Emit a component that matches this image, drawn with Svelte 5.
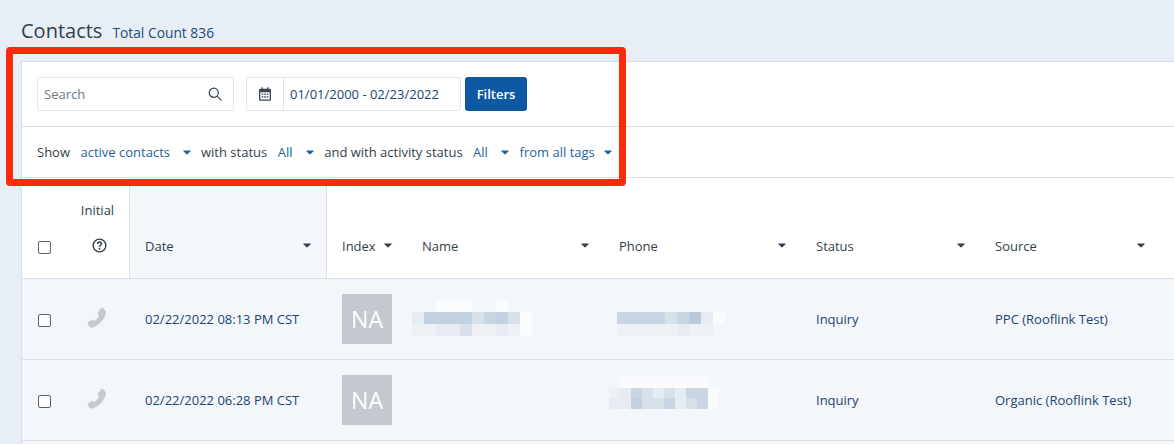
<script>
	const columns = [
		{ label: 'Date', cls: 'date' },
		{ label: 'Index', cls: 'index' },
		{ label: 'Name', cls: 'name' },
		{ label: 'Phone', cls: 'phone' },
		{ label: 'Status', cls: 'status' },
		{ label: 'Source', cls: 'source' }
	];

	// colour cells of the blurred-out name and phone values
	const A = '#c3d0df', B = '#c9d5e2', C = '#d8e1ea', D = '#e6ecf1', E = '#edf1f6', F = '#fafbfd', _ = 'transparent', T = '#b9c9da';
	const rows = [
		{
			date: '02/22/2022 08:13 PM CST',
			source: 'PPC (Rooflink Test)',
			name: { left: 5, w: 12, h: 12, up: 1, cells: [
				[_, _, F, F, F, _, _, F, _, _],
				[D, A, A, A, A, C, B, A, C, F],
				[E, E, D, D, C, E, E, D, E, F]
			] },
			phone: { left: 13, w: 12, h: 12, up: 1, cells: [
				[_, _, _, _, _, _, _, _, _],
				[B, B, B, B, C, B, T, D, F],
				[E, E, E, E, E, D, E, E, _]
			] }
		},
		{
			date: '02/22/2022 06:28 PM CST',
			source: 'Organic (Rooflink Test)',
			name: null,
			phone: { left: 5, w: 11, h: 10.5, up: 7, cells: [
				[_, F, F, F, F, F, F, F, F, _],
				[E, D, B, C, D, C, D, B, B, F],
				[D, D, A, C, C, B, D, C, B, F]
			] }
		},
		{ date: '', source: '', name: null, phone: null }
	];
</script>

{#snippet caret()}
	<svg class="caret" viewBox="0 0 10 6" width="8" height="5"><path d="M1 .4h8c.6 0 .9.7.5 1.100L5.500 5.300c-.3.3-.7.3-1 0L.5 1.500C.1 1.100.4.4 1 .4z"/></svg>
{/snippet}

{#snippet mosaic(m)}
	{#if m}
		<div class="mosaic" style="margin-left: {m.left}px; margin-bottom: {m.up * 2}px">
			{#each m.cells as line}
				<div class="line">
					{#each line as colour}
						<i style="background: {colour}; width: {m.w}px; height: {m.h}px"></i>
					{/each}
				</div>
			{/each}
		</div>
	{/if}
{/snippet}

<div class="page">
	<header class="title">
		<h1>Contacts</h1>
		<span>Total Count 836</span>
	</header>

	<section class="card">
		<div class="toolbar">
			<div class="search">
				<input placeholder="Search" />
				<button aria-label="Search">
					<svg viewBox="0 0 16 16" width="14" height="14" fill="none" stroke="#3a4654" stroke-width="1.4"><circle cx="6.600" cy="6.600" r="5.200"/><path d="M10.400 10.400l4.600 4.600" stroke-linecap="round"/></svg>
				</button>
			</div>
			<div class="range">
				<span class="cal">
					<svg viewBox="0 0 14 16" width="12" height="14"><path fill="#3a4654" d="M3 0h1.500v2h5V0H11v2h1.500c.8 0 1.500.7 1.500 1.500v11c0 .8-.7 1.500-1.500 1.500h-11C.7 16 0 15.300 0 14.500v-11C0 2.700.7 2 1.500 2H3zM1.500 6v8.500h11V6z"/><path fill="#3a4654" d="M3 7.500h2v1.500H3zm3 0h2v1.500H6zm3 0h2v1.500H9zm-6 3h2V12H3zm3 0h2V12H6zm3 0h2V12H9z"/></svg>
				</span>
				<span class="dates">01/01/2000 - 02/23/2022</span>
			</div>
			<button class="filters">Filters</button>
		</div>

		<div class="show">
			<span>Show</span>
			<a class="w1">active contacts {@render caret()}</a>
			<span>with status</span>
			<a class="w2">All {@render caret()}</a>
			<span>and with activity status</span>
			<a class="w2">All {@render caret()}</a>
			<a class="w3">from all tags {@render caret()}</a>
		</div>

		<div class="thead">
			<div class="c-check"><input type="checkbox" /></div>
			<div class="c-initial">
				<span>Initial</span>
				<svg viewBox="0 0 16 16" width="15" height="15" fill="none" stroke="#333f4c" stroke-width="1.500"><circle cx="8" cy="8" r="6.800"/><path d="M5.900 6.300c0-1.200.9-2 2.100-2s2.100.8 2.100 1.900c0 1.600-2.100 1.500-2.100 3.100" stroke-width="1.600"/><circle cx="8" cy="11.500" r="1" fill="#333f4c" stroke="none"/></svg>
			</div>
			{#each columns as col}
				<div class="th {col.cls}">
					<span>{col.label}</span>
					{@render caret()}
				</div>
			{/each}
			<div></div>
		</div>

		{#each rows as row}
			<div class="row">
				<div class="c-check"><input type="checkbox" /></div>
				<div class="c-phone">
					<svg viewBox="-1 -1 22 22" width="22" height="22"><path fill="#c3cad0" stroke="#c3cad0" stroke-width="1.200" stroke-linejoin="round" d="M13.600 .6c.5-.3 1.100-.2 1.400.2l2.100 2.700c.3.300.4.800.3 1.200C16 11.400 11.400 16 5.200 18.600c-.6.300-1.300.5-2 .4-.5-.1-.9-.4-1.200-.8L.5 16.200c-.4-.5-.3-1.100.1-1.500l2.600-2c.5-.4 1.200-.3 1.600.1l1.100 1.100c2.900-1.400 4.900-3.700 6-6.700l-1.200-.9c-.5-.4-.6-1.100-.3-1.600z"/></svg>
				</div>
				<div class="td date-cell">{row.date}</div>
				<div class="td">
					{#if row.date}<span class="avatar">NA</span>{/if}
				</div>
				<div class="td pad0">{@render mosaic(row.name)}</div>
				<div class="td pad0">{@render mosaic(row.phone)}</div>
				<div class="td">{row.date ? 'Inquiry' : ''}</div>
				<div class="td">{row.source}</div>
				<div></div>
			</div>
		{/each}
	</section>

	<div class="highlight"></div>
</div>

<style>
	:global(body) {
		margin: 0;
		background: #e8eef5;
		overflow: hidden;
	}

	.page {
		position: relative;
		height: 444px;
		overflow: hidden;
		padding-left: 21px;
		font-family: "Open Sans", sans-serif;
		font-size: 13px;
		color: #333f4c;
	}

	.title {
		display: flex;
		align-items: baseline;
		gap: 10px;
		height: 61px;
		box-sizing: border-box;
		padding-top: 17px;
	}

	h1 {
		margin: 0;
		font-size: 20px;
		font-weight: 400;
		line-height: 27px;
		color: #333f4c;
	}

	.title span {
		font-size: 13.800px;
		color: #1d4a7a;
	}

	.card {
		background: #fff;
		border: 1px solid #d8e1e9;
		border-right: 0;
	}

	.toolbar {
		display: flex;
		align-items: center;
		height: 65px;
		box-sizing: border-box;
		padding: 0 0 0 15px;
		border-bottom: 1px solid #dbe2e8;
	}

	.search {
		display: flex;
		width: 197px;
		height: 34px;
		box-sizing: border-box;
		border: 1px solid #dfe5ea;
		border-radius: 3px;
		margin-right: 12px;
	}

	.search input {
		flex: 1;
		min-width: 0;
		border: 0;
		background: none;
		padding: 0 6px;
		font: inherit;
		outline: none;
	}

	.search input::placeholder {
		color: #6f7a85;
	}

	.search button {
		width: 37px;
		border: 0;
		background: none;
		padding: 0;
		display: flex;
		align-items: center;
		justify-content: center;
	}

	.range {
		display: flex;
		width: 215px;
		height: 34px;
		box-sizing: border-box;
		border: 1px solid #dfe5ea;
		border-radius: 3px;
		margin-right: 4px;
	}

	.cal {
		width: 36px;
		border-right: 1px solid #dfe5ea;
		display: flex;
		align-items: center;
		justify-content: center;
	}

	.dates {
		padding-left: 6px;
		line-height: 32px;
		color: #1c4571;
	}

	.filters {
		width: 62px;
		height: 34px;
		border: 0;
		border-radius: 3px;
		background: #0f59a4;
		color: #fff;
		font: inherit;
		font-weight: 600;
		padding: 0;
	}

	.show {
		display: flex;
		align-items: center;
		height: 50px;
		padding-left: 15px;
		gap: 10.500px;
	}

	.show a {
		display: flex;
		align-items: center;
		justify-content: space-between;
		color: #24639f;
	}

	.show a.w1 { width: 110px; }
	.show a.w2 { width: 36px; }
	.show a.w3 { width: 92px; }

	.show .caret {
		fill: #1e629f;
	}

	.thead,
	.row {
		display: grid;
		grid-template-columns: 44px 64px 197px 80px 197px 197px 179px 180px 1fr;
	}

	.thead {
		height: 100px;
		border-top: 1px solid #dbe2e8;
		border-bottom: 1px solid #d8e0e7;
	}

	.c-check {
		display: flex;
		align-items: center;
		justify-content: center;
		padding-left: 1px;
	}

	.thead .c-check {
		align-items: flex-end;
		padding-bottom: 24px;
	}

	.row .c-check {
		padding-top: 3px;
	}

	input[type="checkbox"] {
		appearance: none;
		width: 13px;
		height: 13px;
		margin: 0;
		background: #fff;
		border: 1px solid #5c6268;
		border-radius: 2px;
	}

	.c-initial {
		display: flex;
		flex-direction: column;
		align-items: center;
		gap: 19px;
		padding-top: 23px;
		border-right: 1px solid #dbe2e8;
	}

	.c-initial svg {
		margin-left: 4px;
	}

	.th {
		display: flex;
		align-items: center;
		justify-content: space-between;
		padding: 36px 15px 0 15px;
	}

	.th.date {
		background: #f3f6fa;
		border-right: 1px solid #dbe2e8;
	}

	.caret {
		fill: #333f4c;
		flex: none;
	}

	.th .caret {
		margin-top: -2px;
	}

	.row {
		height: 80px;
		background: #f3f6fa;
		border-bottom: 1px solid #d8e0e7;
		color: #1c4571;
	}

	.c-phone {
		display: flex;
		align-items: center;
		justify-content: center;
		padding-bottom: 3px;
	}

	.td {
		display: flex;
		align-items: center;
		padding-left: 15px;
	}

	.td.pad0 {
		padding-left: 0;
	}

	.avatar {
		width: 50px;
		height: 50px;
		background: #c3c9ce;
		color: #fff;
		font-size: 23px;
		display: flex;
		align-items: center;
		justify-content: center;
	}

	.mosaic {
		filter: blur(0.6px);
	}

	.line {
		display: flex;
	}

	.mosaic i {
		display: block;
		flex: none;
	}

	.highlight {
		position: absolute;
		left: 6px;
		top: 47px;
		width: 620px;
		height: 139px;
		box-sizing: border-box;
		border: 7px solid #ff2a0c;
		border-radius: 4px;
	}
</style>
